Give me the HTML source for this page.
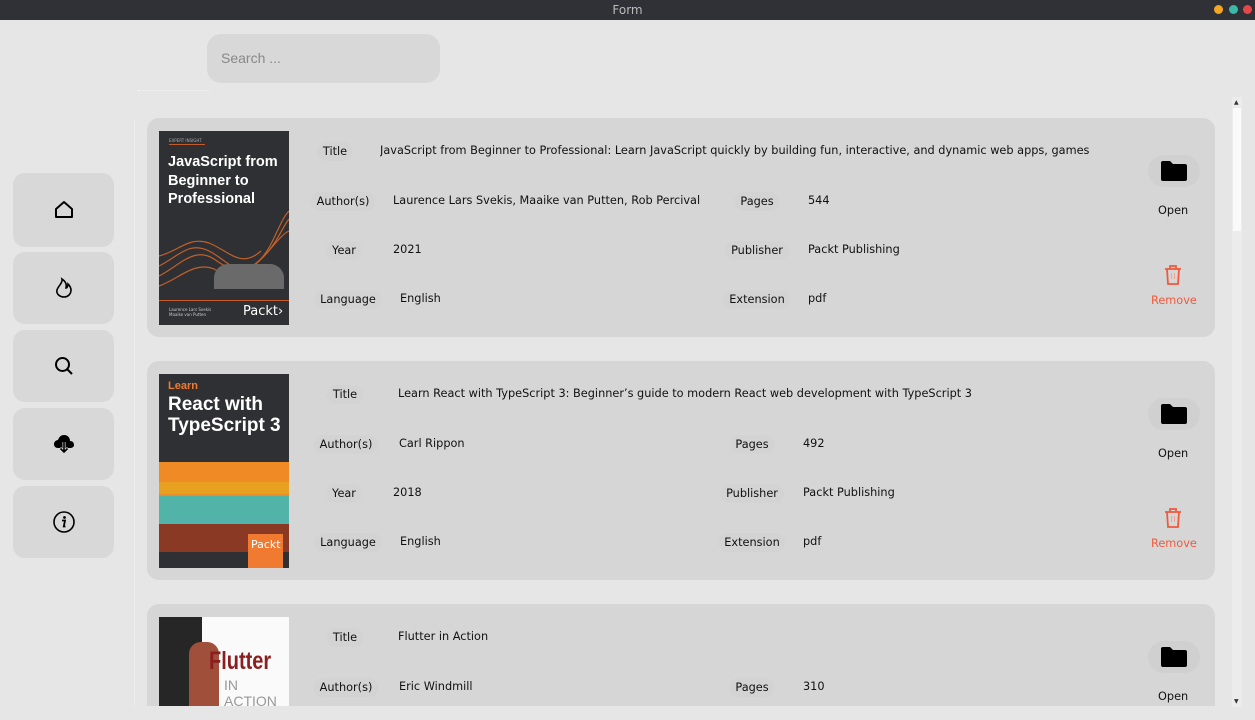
<!DOCTYPE html>
<html><head><meta charset="utf-8"><style>
*{margin:0;padding:0;box-sizing:border-box}
html,body{width:1255px;height:720px;overflow:hidden}
body{background:#e6e6e6;font-family:"DejaVu Sans","Liberation Sans",sans-serif;font-size:11.3px;color:#111;position:relative}
.tb{position:absolute;left:0;top:0;width:1255px;height:20px;background:#2f3136;color:#bbb;text-align:center;font-size:12px;line-height:21px}
.dot{position:absolute;top:5px;width:9px;height:9px;border-radius:50%}
.search{position:absolute;left:207px;top:34px;width:233px;height:49px;background:#d8d8d8;border-radius:14px;color:#888;font-size:14px;line-height:49px;padding-left:14px;font-family:"Liberation Sans",sans-serif}
.nb{position:absolute;left:13px;width:101px;background:#d8d8d8;border-radius:12px;display:flex;align-items:center;justify-content:center}
.vl{position:absolute;left:134px;top:120px;width:1px;height:586px;border-left:1px dotted #f4f4f4}
.card{position:absolute;left:147px;width:1068px;height:219px;background:#d6d6d6;border-radius:12px}
.cover{position:absolute;left:12px;top:13px;width:130px;height:194px;overflow:hidden}
.t{position:absolute;white-space:nowrap}
.lb{position:absolute;transform:translateX(-50%);padding:3px 6px;border-radius:12px;background:#d3d3d3;white-space:nowrap}
.open{position:absolute;left:1001px;top:37px;width:52px;height:32px;background:#d0d0d0;border-radius:16px;display:flex;align-items:center;justify-content:center}
.rm{color:#f05a3c}
</style></head><body>
<div class="tb">Form</div>
<div class="dot" style="left:1214px;background:#f5a623"></div>
<div class="dot" style="left:1229px;background:#3bb8a8"></div>
<div class="dot" style="left:1243px;background:#e8474a"></div>
<div class="search">Search ...</div>
<div style="position:absolute;left:138px;top:90px;width:72px;border-top:1px dotted #f4f4f4"></div>

<div class="nb" style="top:173px;height:74px"><svg width="20" height="20" viewBox="0 0 20 20"><path d="M2 17V9L10 2L18 9V17Z" fill="none" stroke="#000" stroke-width="2" stroke-linejoin="round"/></svg></div>
<div class="nb" style="top:252px;height:72px"><svg width="20" height="22" viewBox="0 0 20 22"><path d="M8 2C9 6 4 9 3 13C2 17 6 20 10 20C14 20 17 17 17 13C17 10 15 8 14 7C14 9 13 11 12 11C13 7 11 4 8 2Z" fill="none" stroke="#000" stroke-width="1.6"/></svg></div>
<div class="nb" style="top:330px;height:72px"><svg width="20" height="20" viewBox="0 0 20 20"><circle cx="8.5" cy="8.5" r="6.5" fill="none" stroke="#000" stroke-width="2"/><path d="M13 13L18 18" stroke="#000" stroke-width="2"/></svg></div>
<div class="nb" style="top:408px;height:72px"><svg width="22" height="20" viewBox="0 0 22 20"><path d="M5 14C2 14 1 12 1 10C1 8 3 6 5 6C6 3 8 1 11 1C15 1 17 4 17 7C20 7 21 9 21 11C21 13 19 14 17 14Z" fill="#000"/><path d="M11 8V18M7 14L11 18L15 14" stroke="#d8d8d8" stroke-width="3" fill="none"/><path d="M11 8V18M7.5 14.5L11 18L14.5 14.5" stroke="#000" stroke-width="1.6" fill="none"/></svg></div>
<div class="nb" style="top:486px;height:72px"><svg width="22" height="22" viewBox="0 0 22 22"><circle cx="11" cy="11" r="10" fill="none" stroke="#000" stroke-width="1.6"/><circle cx="11.5" cy="6.5" r="1.4" fill="#000"/><path d="M9 9.5H12L10.8 15.5H12.5" stroke="#000" stroke-width="1.8" fill="none"/></svg></div>
<div class="vl"></div>

<!-- card 1 -->
<div class="card" style="top:118px">
 <div class="cover" style="background:#2f3033">
  <div style="position:absolute;left:10px;top:7px;font-size:4px;color:#aaa">EXPERT INSIGHT</div>
  <div style="position:absolute;left:10px;top:13px;width:36px;height:1px;background:#c65a2a"></div>
  <div style="position:absolute;left:9px;top:22px;color:#fff;font-weight:bold;font-size:14.5px;line-height:18.5px;font-family:'Liberation Sans',sans-serif">JavaScript from<br>Beginner to<br>Professional</div>
  <svg style="position:absolute;left:0;top:70px" width="130" height="100"><g fill="none" stroke="#c0602a" stroke-width="1.2"><path d="M0 65C20 55 30 40 50 50C70 60 80 80 100 60C115 45 120 20 130 10"/><path d="M0 75C20 65 35 45 55 58C75 72 85 75 105 55C118 42 124 25 130 18"/><path d="M0 85C20 78 35 60 55 68C75 80 90 72 108 52C120 38 125 32 130 30"/><path d="M0 55C20 50 30 35 50 42C70 50 82 68 102 50"/></g></svg>
  <div style="position:absolute;left:55px;top:133px;width:70px;height:25px;background:#6a6a6a;border-radius:14px 14px 0 0"></div>
  <div style="position:absolute;left:0;top:169px;width:130px;height:1px;background:#c65a2a"></div>
  <div style="position:absolute;left:84px;top:173px;color:#fff;font-size:13px">Packt›</div>
  <div style="position:absolute;left:10px;top:176px;font-size:4px;color:#ccc">Laurence Lars Svekis<br>Maaike van Putten</div>
 </div>
 <div class="lb" style="left:188px;top:24px">Title</div><div class="t" style="left:233px;top:26px;width:710px;overflow:hidden">JavaScript from Beginner to Professional: Learn JavaScript quickly by building fun, interactive, and dynamic web apps, games, a</div>
 <div class="lb" style="left:196px;top:74px">Author(s)</div><div class="t" style="left:246px;top:76px">Laurence Lars Svekis, Maaike van Putten, Rob Percival</div>
 <div class="lb" style="left:197px;top:123px">Year</div><div class="t" style="left:246px;top:125px">2021</div>
 <div class="lb" style="left:201px;top:172px">Language</div><div class="t" style="left:253px;top:174px">English</div>
 <div class="lb" style="left:610px;top:74px">Pages</div><div class="t" style="left:661px;top:76px">544</div>
 <div class="lb" style="left:610px;top:123px">Publisher</div><div class="t" style="left:661px;top:125px">Packt Publishing</div>
 <div class="lb" style="left:610px;top:172px">Extension</div><div class="t" style="left:661px;top:174px">pdf</div>
 <div class="open"><svg width="28" height="22" viewBox="0 0 28 22"><path d="M1 3Q1 1 3 1H10L13 4H25Q27 4 27 6V19Q27 21 25 21H3Q1 21 1 19Z" fill="#000"/></svg></div>
 <div class="t" style="left:1011px;top:86px">Open</div>
 <svg style="position:absolute;left:1016px;top:146px" width="20" height="22" viewBox="0 0 20 22"><path d="M2 5H18M7 5V2H13V5M4 5L5 20H15L16 5" fill="none" stroke="#f05a3c" stroke-width="1.8"/><path d="M8.5 9V15M11.5 9V15" stroke="#f8a090" stroke-width="1"/></svg>
 <div class="t rm" style="left:1004px;top:176px">Remove</div>
</div>

<!-- card 2 -->
<div class="card" style="top:361px">
 <div class="cover" style="background:#2f3033">
  <div style="position:absolute;left:9px;top:6px;color:#f07a30;font-weight:bold;font-size:11px;font-family:'Liberation Sans',sans-serif">Learn</div>
  <div style="position:absolute;left:9px;top:20px;color:#fff;font-weight:bold;font-size:19px;line-height:21px;font-family:'Liberation Sans',sans-serif">React with<br>TypeScript 3</div>
  <div style="position:absolute;left:0;top:88px;width:130px;height:34px;background:#f08a24"></div>
  <div style="position:absolute;left:0;top:108px;width:130px;height:12px;background:#e8a020"></div>
  <div style="position:absolute;left:0;top:122px;width:130px;height:28px;background:#52b3a8"></div>
  <div style="position:absolute;left:0;top:150px;width:130px;height:30px;background:#8a3a24"></div>
  <div style="position:absolute;left:0;top:178px;width:130px;height:16px;background:#2f3033"></div>
  <div style="position:absolute;left:89px;top:160px;width:35px;height:34px;background:#f07a30;color:#fff;font-size:11px;padding:4px 3px">Packt</div>
 </div>
 <div class="lb" style="left:198px;top:24px">Title</div><div class="t" style="left:251px;top:26px">Learn React with TypeScript 3: Beginner’s guide to modern React web development with TypeScript 3</div>
 <div class="lb" style="left:199px;top:74px">Author(s)</div><div class="t" style="left:252px;top:76px">Carl Rippon</div>
 <div class="lb" style="left:197px;top:123px">Year</div><div class="t" style="left:246px;top:125px">2018</div>
 <div class="lb" style="left:201px;top:172px">Language</div><div class="t" style="left:253px;top:174px">English</div>
 <div class="lb" style="left:605px;top:74px">Pages</div><div class="t" style="left:656px;top:76px">492</div>
 <div class="lb" style="left:605px;top:123px">Publisher</div><div class="t" style="left:656px;top:125px">Packt Publishing</div>
 <div class="lb" style="left:605px;top:172px">Extension</div><div class="t" style="left:656px;top:174px">pdf</div>
 <div class="open"><svg width="28" height="22" viewBox="0 0 28 22"><path d="M1 3Q1 1 3 1H10L13 4H25Q27 4 27 6V19Q27 21 25 21H3Q1 21 1 19Z" fill="#000"/></svg></div>
 <div class="t" style="left:1011px;top:86px">Open</div>
 <svg style="position:absolute;left:1016px;top:146px" width="20" height="22" viewBox="0 0 20 22"><path d="M2 5H18M7 5V2H13V5M4 5L5 20H15L16 5" fill="none" stroke="#f05a3c" stroke-width="1.8"/><path d="M8.5 9V15M11.5 9V15" stroke="#f8a090" stroke-width="1"/></svg>
 <div class="t rm" style="left:1004px;top:176px">Remove</div>
</div>

<!-- card 3 -->
<div style="position:absolute;left:147px;top:604px;width:1068px;height:102px;overflow:hidden">
<div class="card" style="top:0;left:0">
 <div class="cover" style="background:#fafafa">
  <div style="position:absolute;left:0;top:0;width:43px;height:194px;background:#262626"></div>
  <div style="position:absolute;left:30px;top:25px;width:30px;height:70px;background:#a0503a;border-radius:12px 12px 0 0"></div>
  <div style="position:absolute;left:50px;top:30px;color:#8b1e1e;font-weight:bold;font-size:25px;font-family:'Liberation Sans',sans-serif;transform:scaleX(0.8);transform-origin:left">Flutter</div>
  <div style="position:absolute;left:65px;top:60px;color:#999;font-size:14px;font-family:'Liberation Sans',sans-serif">IN ACTION</div>
 </div>
 <div class="lb" style="left:198px;top:24px">Title</div><div class="t" style="left:251px;top:26px">Flutter in Action</div>
 <div class="lb" style="left:199px;top:74px">Author(s)</div><div class="t" style="left:252px;top:76px">Eric Windmill</div>
 <div class="lb" style="left:605px;top:74px">Pages</div><div class="t" style="left:656px;top:76px">310</div>
 <div class="open"><svg width="28" height="22" viewBox="0 0 28 22"><path d="M1 3Q1 1 3 1H10L13 4H25Q27 4 27 6V19Q27 21 25 21H3Q1 21 1 19Z" fill="#000"/></svg></div>
 <div class="t" style="left:1011px;top:86px">Open</div>
</div></div>

<!-- scrollbar -->
<div style="position:absolute;left:1232px;top:97px;width:10px;height:610px;background:#ececec"></div>
<div style="position:absolute;left:1233px;top:108px;width:8px;height:123px;background:#fafafa"></div>
<div style="position:absolute;left:1234px;top:99px;font-size:6px;color:#333">▲</div>
<div style="position:absolute;left:1234px;top:698px;font-size:6px;color:#333">▼</div>
</body></html>
